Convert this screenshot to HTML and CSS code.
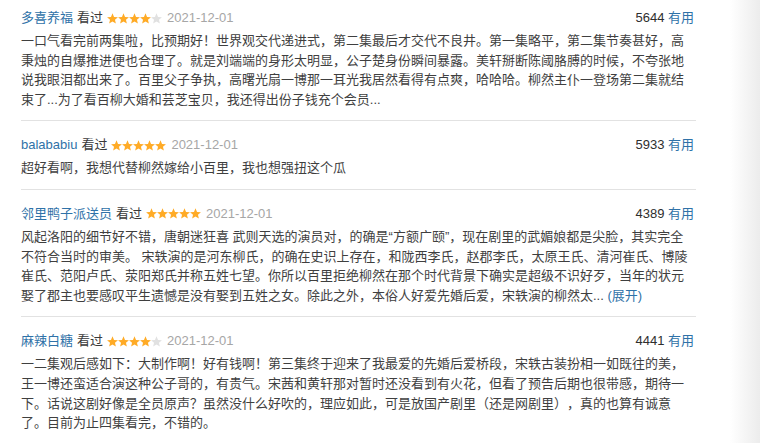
FILE: index.html
```html
<!DOCTYPE html>
<html lang="zh-CN">
<head>
<meta charset="utf-8">
<title>短评</title>
<link rel="stylesheet" href="styles.css">
</head>
<body>
<svg class="defs" width="0" height="0" aria-hidden="true">
  <defs>
    <polygon id="star" points="5.5,0.3 7.03,3.9 10.92,4.24 7.97,6.8 8.85,10.61 5.5,8.6 2.15,10.61 3.03,6.8 0.08,4.24 3.97,3.9"/>
  </defs>
</svg>
<main class="list">
  <div class="comment">
    <div class="info">
      <div class="meta">
        <a class="user">多喜养福</a><span class="status">看过</span><svg class="stars" width="55" height="11" viewBox="0 0 55 11"><use href="#star" class="on"/><use href="#star" x="11" class="on"/><use href="#star" x="22" class="on"/><use href="#star" x="33" class="on"/><use href="#star" x="44" class="off"/></svg><span class="date">2021-12-01</span>
      </div>
      <div class="votes"><span class="count">5644</span> <a class="useful">有用</a></div>
    </div>
    <p class="text">一口气看完前两集啦，比预期好！世界观交代递进式，第二集最后才交代不良井。第一集略平，第二集节奏甚好，高秉烛的自爆推进便也合理了。就是刘端端的身形太明显，公子楚身份瞬间暴露。美轩掰断陈阈胳膊的时候，不夸张地说我眼泪都出来了。百里父子争执，高曙光扇一博那一耳光我居然看得有点爽，哈哈哈。柳然主仆一登场第二集就结束了...为了看百柳大婚和芸芝宝贝，我还得出份子钱充个会员...</p>
  </div>
  <div class="comment">
    <div class="info">
      <div class="meta">
        <a class="user">balababiu</a><span class="status">看过</span><svg class="stars" width="55" height="11" viewBox="0 0 55 11"><use href="#star" class="on"/><use href="#star" x="11" class="on"/><use href="#star" x="22" class="on"/><use href="#star" x="33" class="on"/><use href="#star" x="44" class="on"/></svg><span class="date">2021-12-01</span>
      </div>
      <div class="votes"><span class="count">5933</span> <a class="useful">有用</a></div>
    </div>
    <p class="text">超好看啊，我想代替柳然嫁给小百里，我也想强扭这个瓜</p>
  </div>
  <div class="comment">
    <div class="info">
      <div class="meta">
        <a class="user">邻里鸭子派送员</a><span class="status">看过</span><svg class="stars" width="55" height="11" viewBox="0 0 55 11"><use href="#star" class="on"/><use href="#star" x="11" class="on"/><use href="#star" x="22" class="on"/><use href="#star" x="33" class="on"/><use href="#star" x="44" class="on"/></svg><span class="date">2021-12-01</span>
      </div>
      <div class="votes"><span class="count">4389</span> <a class="useful">有用</a></div>
    </div>
    <p class="text">风起洛阳的细节好不错，唐朝迷狂喜 武则天选的演员对，的确是“方额广颐”，现在剧里的武媚娘都是尖脸，其实完全不符合当时的审美。 宋轶演的是河东柳氏，的确在史识上存在，和陇西李氏，赵郡李氏，太原王氏、清河崔氏、博陵崔氏、范阳卢氏、荥阳郑氏并称五姓七望。你所以百里拒绝柳然在那个时代背景下确实是超级不识好歹，当年的状元娶了郡主也要感叹平生遗憾是没有娶到五姓之女。除此之外，本俗人好爱先婚后爱，宋轶演的柳然太... <a class="more">(展开)</a></p>
  </div>
  <div class="comment">
    <div class="info">
      <div class="meta">
        <a class="user">麻辣白糖</a><span class="status">看过</span><svg class="stars" width="55" height="11" viewBox="0 0 55 11"><use href="#star" class="on"/><use href="#star" x="11" class="on"/><use href="#star" x="22" class="on"/><use href="#star" x="33" class="on"/><use href="#star" x="44" class="off"/></svg><span class="date">2021-12-01</span>
      </div>
      <div class="votes"><span class="count">4441</span> <a class="useful">有用</a></div>
    </div>
    <p class="text">一二集观后感如下：大制作啊！好有钱啊！第三集终于迎来了我最爱的先婚后爱桥段，宋轶古装扮相一如既往的美，王一博还蛮适合演这种公子哥的，有贵气。宋茜和黄轩那对暂时还没看到有火花，但看了预告后期也很带感，期待一下。话说这剧好像是全员原声？虽然没什么好吹的，理应如此，可是放国产剧里（还是网剧里），真的也算有诚意了。目前为止四集看完，不错的。</p>
  </div>
</main>
<div class="shade"></div>
</body>
</html>
```

FILE: styles.css
```css
html, body {
  margin: 0;
  padding: 0;
  background: #fff;
}

body {
  display: flex;
  height: 443px;
  overflow: hidden;
  font-family: "Liberation Sans", "Noto Sans CJK SC", sans-serif;
  font-size: 13px;
  color: #3f3f3f;
  text-spacing-trim: space-all;
}

.defs {
  position: absolute;
  width: 0;
  height: 0;
}

.list {
  width: 675px;
  margin-left: 21px;
  flex: none;
}

.comment {
  padding: 14px 0 11px;
  border-bottom: 1px solid #e2e2e2;
}

.comment:first-child {
  padding-top: 8px;
}

.info {
  display: flex;
  justify-content: space-between;
  align-items: center;
  height: 20px;
  line-height: 20px;
}

.meta {
  display: flex;
  align-items: center;
}

.user {
  color: #2f72a8;
}

.status {
  margin-left: 4px;
  color: #3a3a3a;
}

.stars {
  margin-left: 4px;
  display: block;
}

.stars .on {
  fill: #ffab26;
}

.stars .off {
  fill: #e1e1e1;
}

.date {
  margin-left: 5px;
  color: #a6a6a6;
}

.votes {
  margin-right: 2px;
}

.count {
  color: #2e2e2e;
}

.useful {
  color: #2f72a8;
}

.text {
  margin: 3px 4px 0 0;
  line-height: 19.6px;
  color: #3f3f3f;
}

.more {
  color: #2f72a8;
}

.shade {
  margin-left: auto;
  width: 30px;
  flex: none;
  background: linear-gradient(to right, #ffffff, #ececec);
}
```
